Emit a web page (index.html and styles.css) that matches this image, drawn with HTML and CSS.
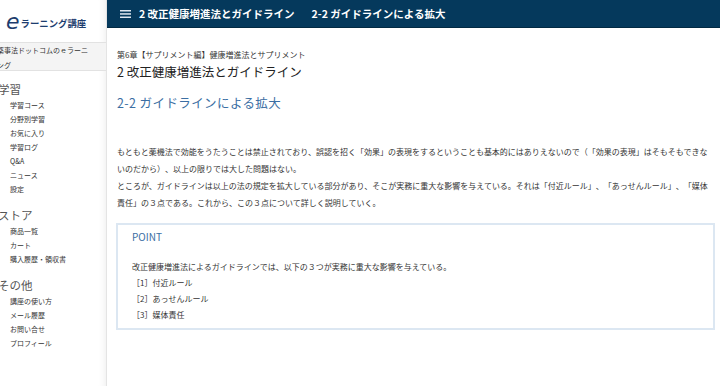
FILE: index.html
```html
<!DOCTYPE html>
<html lang="ja">
<head>
  <meta charset="UTF-8">
  <meta name="viewport" content="width=device-width, initial-scale=1.0">
  <title>2-2 ガイドラインによる拡大 - eラーニング講座</title>
  <link rel="stylesheet" href="styles.css">
</head>
<body>
  <div class="layout">
    <aside class="sidebar">
      <div class="logo">
        <span class="logo-e">e</span><span class="logo-text">ラーニング講座</span>
      </div>
      <div class="site-name">薬事法ドットコムのｅラーニング</div>

      <nav class="menu">
        <div class="menu-section">
          <h4>学習</h4>
          <a href="#">学習コース</a>
          <a href="#">分野別学習</a>
          <a href="#">お気に入り</a>
          <a href="#">学習ログ</a>
          <a href="#">Q&amp;A</a>
          <a href="#">ニュース</a>
          <a href="#">設定</a>
        </div>
        <div class="menu-section">
          <h4>ストア</h4>
          <a href="#">商品一覧</a>
          <a href="#">カート</a>
          <a href="#">購入履歴・領収書</a>
        </div>
        <div class="menu-section">
          <h4>その他</h4>
          <a href="#">講座の使い方</a>
          <a href="#">メール履歴</a>
          <a href="#">お問い合せ</a>
          <a href="#">プロフィール</a>
        </div>
      </nav>
    </aside>

    <div class="main">
      <header class="topbar">
        <svg class="menu-icon" width="11" height="8" viewBox="0 0 11 8">
          <rect x="0" y="0" width="11" height="1.5" fill="#dfe7f0"/>
          <rect x="0" y="3.2" width="11" height="1.5" fill="#dfe7f0"/>
          <rect x="0" y="6.5" width="11" height="1.5" fill="#dfe7f0"/>
        </svg>
        <span class="topbar-title">2 改正健康増進法とガイドライン</span>
        <span class="topbar-title sub">2-2 ガイドラインによる拡大</span>
      </header>

      <article class="content">
        <div class="breadcrumb">第6章【サプリメント編】健康増進法とサプリメント</div>
        <h1>2 改正健康増進法とガイドライン</h1>
        <h2>2-2 ガイドラインによる拡大</h2>

        <p class="body-text">もともと薬機法で効能をうたうことは禁止されており、誤認を招く「効果」の表現をするということも基本的にはありえないので（「効果の表現」はそもそもできないのだから）、以上の限りでは大した問題はない。<br>ところが、ガイドラインは以上の法の規定を拡大している部分があり、そこが実務に重大な影響を与えている。それは「付近ルール」、「あっせんルール」、「媒体責任」の３点である。これから、この３点について詳しく説明していく。</p>

        <div class="point-box">
          <div class="point-title">POINT</div>
          <p>改正健康増進法によるガイドラインでは、以下の３つが実務に重大な影響を与えている。</p>
          <p>［1］付近ルール</p>
          <p>［2］あっせんルール</p>
          <p>［3］媒体責任</p>
        </div>
      </article>
    </div>
  </div>
</body>
</html>
```

FILE: styles.css
```css
body {
  margin: 0;
  font-family: "Noto Sans CJK JP", "Noto Sans", sans-serif;
  color: #333;
  background: #fff;
  text-spacing-trim: space-all;
}
.layout {
  display: flex;
  height: 386px;
  overflow: hidden;
}

/* sidebar */
.sidebar {
  width: 106px;
  flex-shrink: 0;
  border-right: 1px solid #e4e4e4;
  box-shadow: inset -7px 0 6px -5px rgba(0,0,0,0.06);
  overflow: hidden;
}
.logo {
  height: 42px;
  display: flex;
  align-items: center;
  padding-left: 6px;
  color: #1d3d6e;
}
.logo-e {
  font-family: "DejaVu Sans", sans-serif;
  font-style: italic;
  font-size: 22px;
  line-height: 1;
  margin-top: 2px;
  margin-right: 1px;
}
.logo-text {
  font-size: 9.4px;
  font-weight: bold;
  margin-top: 4px;
}
.site-name {
  background: #f4f4f4;
  border-top: 1px solid #e2e2e2;
  border-bottom: 1px solid #e2e2e2;
  height: 27px;
  padding: 0 15px 0 0;
  margin-left: -3px;
  font-size: 7px;
  line-height: 15px;
  color: #333;
  box-sizing: content-box;
}
.menu {
  padding-top: 10px;
}
.menu-section {
  margin-bottom: 11px;
}
.menu-section h4 {
  margin: 0 0 1px -2px;
  font-size: 11.5px;
  font-weight: normal;
  line-height: 16px;
  color: #555;
}
.menu-section a {
  display: block;
  padding-left: 10px;
  font-size: 7px;
  line-height: 14px;
  color: #333;
  text-decoration: none;
}

/* main area */
.main {
  flex: 1;
  min-width: 0;
}
.topbar {
  height: 27px;
  background: #05395c;
  border-bottom: 1px solid #022a43;
  display: flex;
  align-items: center;
  padding-left: 13px;
  color: #fff;
}
.menu-icon {
  margin-right: 8px;
}
.topbar-title {
  font-size: 10.5px;
  font-weight: bold;
  white-space: nowrap;
}
.topbar-title.sub {
  margin-left: 17px;
}
.content {
  padding: 21px 5px 0 10px;
}
.breadcrumb {
  font-size: 8px;
  line-height: 12px;
}
h1 {
  margin: 3px 0 0;
  font-size: 12.5px;
  font-weight: normal;
  line-height: 16px;
  color: #222;
}
h2 {
  margin: 15px 0 0;
  font-size: 12.5px;
  font-weight: normal;
  line-height: 16px;
  letter-spacing: 0.4px;
  color: #3b6ea3;
}
.body-text {
  margin: 32px 0 0;
  font-size: 8px;
  line-height: 17px;
}
.point-box {
  margin: 12px 0 0 -1px;
  border: 2px solid #dce7f2;
  padding: 5px 14px 5px;
}
.point-title {
  font-size: 10px;
  line-height: 14px;
  color: #3b6ea3;
  margin-bottom: 15px;
}
.point-box p {
  margin: 0;
  font-size: 8px;
  line-height: 16px;
}
```
